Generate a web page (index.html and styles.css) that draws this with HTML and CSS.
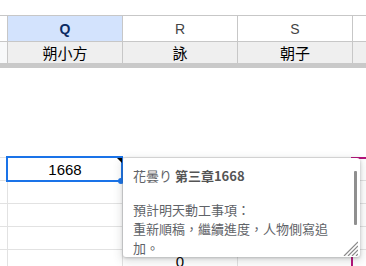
FILE: index.html
```html
<!DOCTYPE html>
<html lang="zh-Hant">
<head>
    <meta charset="UTF-8" />
    <title>Sheet</title>
    <link rel="stylesheet" href="styles.css">
</head>
<body>

    <div class="sheet">
        <!-- 工具列下緣 -->
        <div class="top"></div>

        <!-- 欄標題 -->
        <div class="row hdr">
            <div class="c corner"></div>
            <div class="c sel">Q</div>
            <div class="c">R</div>
            <div class="c">S</div>
            <div class="c"></div>
        </div>

        <!-- 凍結列 -->
        <div class="row frozen">
            <div class="c corner"></div>
            <div class="c">朔小方</div>
            <div class="c">詠</div>
            <div class="c">朝子</div>
            <div class="c"></div>
        </div>
        <div class="frozen-bar"></div>

        <div class="blank"></div>

        <!-- 儲存格 -->
        <div class="grid">
            <div class="row">
                <div class="c corner"></div>
                <div class="c active">1668<span class="handle"></span></div>
                <div class="c"></div>
                <div class="c"></div>
                <div class="c"></div>
            </div>
            <div class="row">
                <div class="c corner"></div>
                <div class="c"></div>
                <div class="c"></div>
                <div class="c"></div>
                <div class="c"></div>
            </div>
            <div class="row">
                <div class="c corner"></div>
                <div class="c"></div>
                <div class="c"></div>
                <div class="c"></div>
                <div class="c"></div>
            </div>
            <div class="row">
                <div class="c corner"></div>
                <div class="c"></div>
                <div class="c"></div>
                <div class="c"></div>
                <div class="c"></div>
            </div>
            <div class="row">
                <div class="c corner"></div>
                <div class="c"></div>
                <div class="c">0</div>
                <div class="c"></div>
                <div class="c"></div>
            </div>

            <!-- 協作者選取範圍 -->
            <div class="peer"></div>

            <!-- 附註 -->
            <div class="note">
                <div class="note-title">花曇り <b>第三章1668</b></div>
                <div class="note-body">預計明天動工事項：<br>重新順稿，繼續進度，人物側寫追加。</div>
                <div class="note-thumb"></div>
                <svg class="note-grip" width="15" height="15" viewBox="0 0 15 15">
                    <path d="M15 1 L1 15 M15 5 L5 15 M15 9 L9 15 M15 13 L13 15" stroke="#8a8a8a" stroke-width="1.2" fill="none" />
                </svg>
            </div>
        </div>
    </div>

</body>
</html>
```

FILE: styles.css
```css
/* 基本 */
html, body {
    margin: 0;
    padding: 0;
    width: 366px;
    height: 266px;
    overflow: hidden;
    background: #fff;
}

.sheet {
    height: 266px;
    overflow: hidden;
    font-family: "Liberation Sans", Arial, "Noto Sans CJK TC", sans-serif;
    color: #000;
}

.top {
    height: 15px;
}

/* 列與欄 */
.row {
    display: grid;
    grid-template-columns: 7px 115px 115px 115px 1fr;
    box-sizing: border-box;
}

.c {
    border-left: 1px solid #e2e2e2;
    display: flex;
    align-items: center;
    justify-content: center;
    font-size: 15px;
    white-space: nowrap;
}

.c.corner {
    border-left: none;
}

/* 欄標題 */
.hdr {
    height: 27px;
    border-top: 1px solid #c7c7c7;
    border-bottom: 1px solid #c7c7c7;
}

.hdr .c {
    border-left-color: #c7c7c7;
    font-size: 14px;
    color: #444;
}

.hdr .c.sel {
    background: #d3e3fd;
    color: #0a2a63;
    font-weight: bold;
}

/* 凍結列 */
.frozen {
    height: 21px;
}

.frozen .c {
    border-left-color: #c7c7c7;
    background: #efefef;
    font-family: "Noto Sans CJK TC", sans-serif;
    font-size: 15px;
}

.frozen .c.corner {
    background: #f8f9fa;
}

.frozen-bar {
    height: 5px;
    background: #c9c9c9;
}

.blank {
    height: 89px;
}

/* 儲存格 */
.grid {
    position: relative;
    border-top: 1px solid #e2e2e2;
}

.grid .row {
    height: 23px;
    border-bottom: 1px solid #e2e2e2;
}

.active {
    position: relative;
}

/* 作用中儲存格外框 */
.active::after {
    content: "";
    position: absolute;
    left: -2px;
    top: -2px;
    right: -1px;
    bottom: -2px;
    border: 2px solid #1a73e8;
}

/* 附註標記 */
.active::before {
    content: "";
    position: absolute;
    top: 0;
    right: 0;
    border-top: 5px solid #000;
    border-left: 5px solid transparent;
    z-index: 1;
}

.handle {
    position: absolute;
    right: -2px;
    bottom: -4px;
    width: 6px;
    height: 6px;
    border-radius: 50%;
    background: #1a73e8;
    z-index: 1;
}

.peer {
    position: absolute;
    left: 351px;
    top: -1px;
    width: 13px;
    height: 108px;
    border-top: 2px solid #b5117a;
    border-left: 2px solid #b5117a;
}

/* 附註浮動框 */
.note {
    position: absolute;
    left: 123px;
    top: 0;
    width: 237px;
    height: 99px;
    box-sizing: border-box;
    padding: 8px 0 0 10px;
    background: #fff;
    border-radius: 3px;
    box-shadow: 0 1px 3px rgba(60, 64, 67, 0.3), 0 3px 8px 2px rgba(60, 64, 67, 0.15);
    font-family: "Noto Sans CJK TC", sans-serif;
    font-size: 13px;
    color: #5f6368;
    z-index: 2;
}

.note-title {
    line-height: 20px;
}

.note-title b {
    color: #555;
}

.note-body {
    width: 200px;
    margin-top: 14px;
    line-height: 19px;
}

.note-thumb {
    position: absolute;
    right: 3px;
    top: 13px;
    width: 3px;
    height: 54px;
    background: #8f8f8f;
    border-radius: 1px;
}

.note-grip {
    position: absolute;
    right: 2px;
    bottom: 1px;
}
```
